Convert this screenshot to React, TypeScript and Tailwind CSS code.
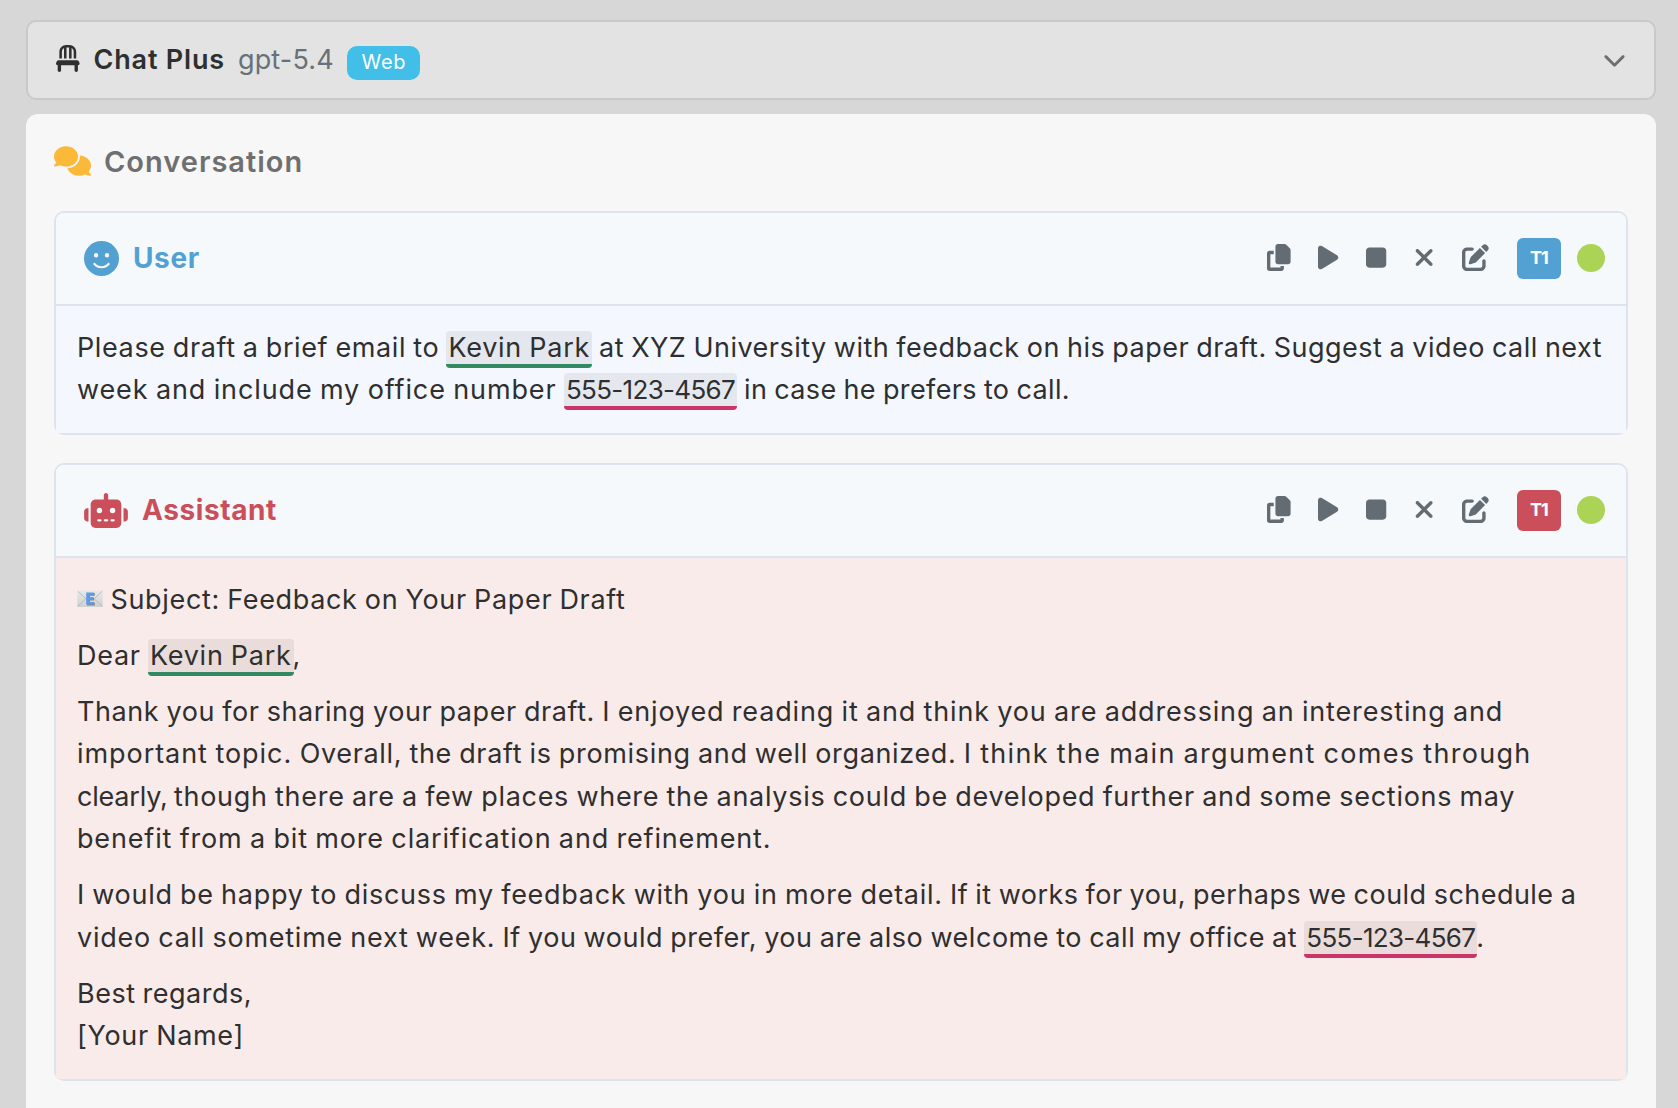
import type { ReactNode } from 'react'
import {
  FaChair,
  FaChevronDown,
  FaComments,
  FaCopy,
  FaFaceSmile,
  FaPenToSquare,
  FaPlay,
  FaRobot,
  FaStop,
  FaXmark,
} from 'react-icons/fa6'

function Line({ children, className = '' }: { children: ReactNode; className?: string }) {
  return <div className={`whitespace-pre ${className}`}>{children}</div>
}

function Mark({ kind, children }: { kind: 'name' | 'phone'; children: ReactNode }) {
  const tone =
    kind === 'name'
      ? 'border-[#338a62] tracking-[0.72px]'
      : 'border-[#cb3469] py-px text-[26px] tracking-[-0.689px]'
  return <span className={`rounded border-b-4 bg-[#2f2f2f]/8 px-[2px] ${tone}`}>{children}</span>
}

function EmailIcon() {
  return (
    <svg viewBox="0 0 26 18" className="mr-[7.5px] inline-block h-[18px] w-[26px] align-[1px]">
      <defs>
        <linearGradient id="paper" x1="0" y1="0" x2="0" y2="1">
          <stop offset="0" stopColor="#e9e9e9" />
          <stop offset="1" stopColor="#cfd0d1" />
        </linearGradient>
      </defs>
      <rect x="0.3" y="0.5" width="25.4" height="16.5" rx="0.8" fill="url(#paper)" />
      <path d="M0.8 1.2 L10 10 M25.2 1.2 L16 10 M0.8 16.4 L8.5 9 M25.2 16.4 L17.5 9" stroke="#b0b2b3" strokeWidth="0.8" fill="none" />
      <path d="M17.8 3 V5.8 H13 V7.6 H17 V10.4 H13 V12.4 H17.8 V15.4 H10 V3 Z" fill="#8d8378" />
      <path d="M16.8 2.4 V5 H12.4 V7.2 H16.2 V9.8 H12.4 V12 H16.8 V14.6 H9.2 V2.4 Z" fill="#5d9bea" />
    </svg>
  )
}

function Toolbar({ badge }: { badge: string }) {
  return (
    <div className="mb-[3px] flex items-center text-[#636b73]">
      <div className="flex items-center gap-[27.6px]">
        <FaCopy className="h-[27px] w-[23.6px]" />
        <FaPlay className="h-[27px] w-[20.25px]" />
        <FaStop className="h-[27px] w-[20.25px]" />
        <FaXmark className="h-[27px] w-[20.25px]" />
        <FaPenToSquare className="size-[27px]" />
      </div>
      <div
        className={`mt-[3px] ml-7 flex h-[41px] w-11 items-center justify-center rounded-md pb-[3px] text-[18px] font-bold tracking-[-0.8px] text-white ${badge}`}
      >
        T1
      </div>
      <div className="mt-[2px] ml-4 size-7 rounded-full bg-[#abd356]" />
    </div>
  )
}

function Card({
  title,
  icon,
  color,
  badge,
  body,
  children,
}: {
  title: string
  icon: ReactNode
  color: string
  badge: string
  body: string
  children: ReactNode
}) {
  return (
    <section className="rounded-[10px] border-2 border-[#dde4ee]">
      <header className="flex h-[93px] items-center justify-between rounded-t-lg border-b-2 border-[#dde4ee] bg-[#f5f9fc] pr-[21px] pl-7">
        <div className={`mb-px flex items-center text-[28px] font-bold ${color}`}>
          {icon}
          <span>{title}</span>
        </div>
        <Toolbar badge={badge} />
      </header>
      <div className={`px-[21px] text-[27px] leading-[42.4px] text-[#2f2f2f] [word-spacing:-1px] ${body}`}>{children}</div>
    </section>
  )
}

export default function App() {
  return (
    <div className="flex h-[1108px] w-[1678px] flex-col gap-[14px] overflow-hidden bg-[#d7d7d7] pt-5 pr-[22px] pl-[26px] font-['Inter',sans-serif]">
      <div className="flex h-20 shrink-0 items-center rounded-[10px] border-2 border-[#c9c9c9] bg-[#e3e3e3] px-7 text-[27px]">
        <FaChair className="-mt-[3px] h-[27px] w-[23.6px] text-[#2f2f2f]" />
        <span className="mt-px ml-[14px] font-semibold tracking-[0.8px] text-[#2f2f2f]">Chat Plus</span>
        <span className="mt-px ml-[13px] tracking-[0.18px] text-[#68717a]">gpt-5.4</span>
        <span className="mt-[6px] ml-[13px] flex h-[34px] w-[73px] items-center justify-center rounded-[10px] bg-[#41bfe9] pb-[2px] pl-px text-[20px] tracking-[0.8px] text-white">
          Web
        </span>
        <FaChevronDown className="mb-[2px] ml-auto size-[23px] text-[#6f6f6f]" />
      </div>

      <main className="flex-1 rounded-t-xl bg-[#f7f7f7] px-7">
        <h2 className="mb-[2px] flex h-[95px] items-center text-[29px] font-semibold tracking-[1px] text-[#6f6f6f]">
          <FaComments className="mr-[13px] mb-px h-[30px] w-[37px] text-[#fbb93a]" />
          Conversation
        </h2>

        <div className="flex flex-col gap-7">
          <Card
            title="User"
            icon={<FaFaceSmile className="mr-[14px] size-[35px]" />}
            color="text-[#52a1d2] tracking-[0.6px]"
            badge="bg-[#52a1d2]"
            body="h-[127px] bg-[#f4f7fe] pt-[20.5px]"
          >
            <Line>
              <span className="tracking-[0.607px]">{'Please draft a brief email to '}</span>
              <Mark kind="name">Kevin Park</Mark>
              <span className="tracking-[0.49px]">
                {' at XYZ University with feedback on his paper draft. Suggest a video call next'}
              </span>
            </Line>
            <Line>
              <span className="tracking-[0.88px]">{'week and include my office number '}</span>
              <Mark kind="phone">555-123-4567</Mark>
              <span className="tracking-[0.378px]">{' in case he prefers to call.'}</span>
            </Line>
          </Card>

          <Card
            title="Assistant"
            icon={<FaRobot className="mr-[14px] h-[35px] w-11" />}
            color="text-[#cb4f5b] tracking-[0.6px]"
            badge="bg-[#cb4f5b]"
            body="flex h-[521px] flex-col gap-[13.8px] bg-[#f9ebea] pt-[20.5px]"
          >
            <Line className="h-[42.4px] tracking-[0.663px]">
              <EmailIcon />
              Subject: Feedback on Your Paper Draft
            </Line>
            <Line>
              <span className="tracking-[0.715px]">{'Dear '}</span>
              <Mark kind="name">Kevin Park</Mark>
              <span className="-ml-px">,</span>
            </Line>
            <div>
              <Line>
                <span className="tracking-[0.585px]">{'Thank you for sharing your paper draft. '}</span>
                <span className="tracking-[0.838px]">
                  I enjoyed reading it and think you are addressing an interesting and
                </span>
              </Line>
              <Line>
                <span className="tracking-[0.942px]">{'important topic. '}</span>
                <span className="tracking-[0.66px]">{'Overall, the draft is promising and well organized. '}</span>
                <span className="tracking-[1.31px]">I think the main argument comes through</span>
              </Line>
              <Line>
                <span className="tracking-[-0.2px]">{'clearly, '}</span>
                <span className="tracking-[0.714px]">
                  though there are a few places where the analysis could be developed further and some sections may
                </span>
              </Line>
              <Line className="tracking-[0.84px]">benefit from a bit more clarification and refinement.</Line>
            </div>
            <div>
              <Line>
                <span className="tracking-[0.724px]">
                  {'I would be happy to discuss my feedback with you in more detail. '}
                </span>
                <span className="tracking-[0.47px]">If it works for you, perhaps we could schedule a</span>
              </Line>
              <Line>
                <span className="tracking-[0.743px]">{'video call sometime next week. '}</span>
                <span className="tracking-[0.532px]">
                  {'If you would prefer, you are also welcome to call my office at '}
                </span>
                <Mark kind="phone">555-123-4567</Mark>
                <span className="-ml-px">.</span>
              </Line>
            </div>
            <div>
              <Line className="tracking-[0.497px]">Best regards,</Line>
              <Line className="tracking-[0.686px]">[Your Name]</Line>
            </div>
          </Card>
        </div>
      </main>
    </div>
  )
}
